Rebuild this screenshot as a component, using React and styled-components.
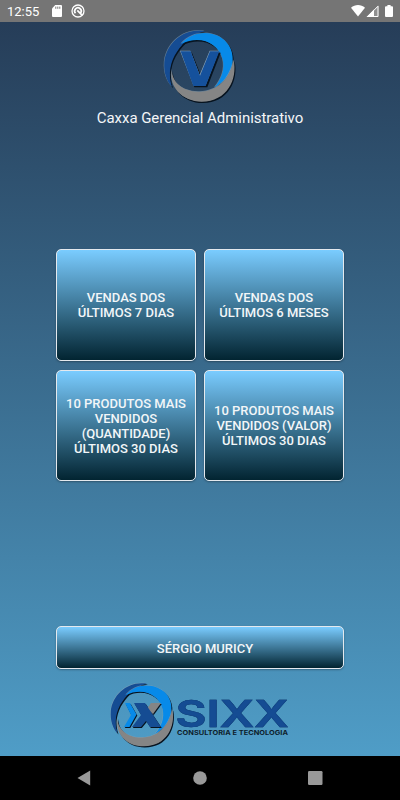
import styled, { createGlobalStyle } from 'styled-components';

const reports = [
  ['VENDAS DOS', 'ÚLTIMOS 7 DIAS'],
  ['VENDAS DOS', 'ÚLTIMOS 6 MESES'],
  ['10 PRODUTOS MAIS', 'VENDIDOS', '(QUANTIDADE)', 'ÚLTIMOS 30 DIAS'],
  ['10 PRODUTOS MAIS', 'VENDIDOS (VALOR)', 'ÚLTIMOS 30 DIAS'],
];

// the three blades of the ring: navy, light blue, gray
const blades = [
  ['#154c93', 'M150 21C88 10 34 56 28 114C26 146 34 170 51 189C38 150 46 112 66 83C86 53 112 32 150 21Z'],
  ['#078ae9', 'M78 60C104 30 140 22 172 30C212 40 236 72 233 112C231 148 208 176 178 191C200 166 210 136 203 106C190 56 134 32 78 60Z'],
  ['#858585', 'M51 136C48 174 86 206 136 203C186 201 222 170 236 108C248 166 216 233 140 233C82 233 40 188 51 136Z'],
];

const Ring = () => (
  <>
    {blades.map(([fill, d]) => (
      <g key={fill}>
        <path d={d} fill="#07131f" transform="translate(3 4)" />
        <path d={d} fill="#8aa3b5" transform="translate(-1.5 -1.5)" opacity="0.6" />
        <path d={d} fill={fill} />
      </g>
    ))}
  </>
);

const App = () => {
  return (
    <Screen>
      <GlobalStyle />
      <StatusBar>
        <Clock>12:55</Clock>
        <svg width="10" height="12" viewBox="0 0 10 12">
          <path fill="#fff" d="M3.2 0H9a1 1 0 0 1 1 1v10a1 1 0 0 1-1 1H1a1 1 0 0 1-1-1V3.4z" />
          <path stroke="#757575" d="M3.8 1.6v2.2M5.8 1.6v2.2M7.8 1.6v2.2" />
        </svg>
        <svg width="14" height="14" viewBox="0 0 14 14" fill="none" stroke="#fff">
          <circle cx="7" cy="7" r="6" strokeWidth="1.3" />
          <path d="M4.5 9.3A3.3 3.3 0 1 1 9.8 8.8M6.3 6.3l5 5" strokeWidth="1.7" />
        </svg>
        <Signals>
          <svg width="14" height="12" viewBox="0 0 14 12">
            <path fill="#fff" d="M0 2.8C4-.9 10-.9 14 2.8L7 11.6z" />
          </svg>
          <svg width="13" height="12" viewBox="0 0 13 12">
            <path fill="#fff" fillOpacity="0.2" d="M12.5 0v12H.5z" />
            <path fill="#fff" d="M8 4.5V12H.5z" />
            <path fill="none" stroke="#fff" d="M12 1.2v10.3H1.7z" />
          </svg>
          <svg width="8" height="12" viewBox="0 0 8 12">
            <path fill="#fff" d="M2.4 0h3.2v1.2H7a1 1 0 0 1 1 1V11a1 1 0 0 1-1 1H1a1 1 0 0 1-1-1V2.2a1 1 0 0 1 1-1h1.4z" />
          </svg>
        </Signals>
      </StatusBar>

      <Content>
        <Header>
          <svg width="90" height="84" viewBox="0 0 270 252">
            <Ring />
            <path fill="#07131f" d="M80 86h31l28 72 30-72h28l-40 104h-39z" />
            <path fill="#8aa3b5" d="M75 80h31l28 72 30-72h28l-40 104h-37z" />
            <path fill="#15519c" d="M77 82h30l28 73 30-73h28l-41 104h-37z" />
          </svg>
          <Title>Caxxa Gerencial Administrativo</Title>
        </Header>

        <Grid>
          {reports.map((lines) => (
            <ReportButton key={lines.join(' ')}>
              {lines.map((line) => (
                <span key={line}>{line}</span>
              ))}
            </ReportButton>
          ))}
        </Grid>

        <UserButton>SÉRGIO MURICY</UserButton>

        <Footer>
          <svg width="190" height="75" viewBox="0 0 190 75">
            <g transform="translate(-2.5 -.6) scale(.296)">
              <Ring />
            </g>
            <g fill="#07131f" transform="translate(.8 1)">
              <path d="M20 25h5l6.500 11.500L24.500 49H19l7-12z" />
              <path d="M42 31l4-6h10l-8 11z" />
              <path d="M29 25h11l16 24H45l-4-6-5 6h-9l9-12z" />
            </g>
            <path fill="#078ae9" d="M20 25h5l6.500 11.500L24.500 49H19l7-12z" />
            <path fill="#858585" d="M42 31l4-6h10l-8 11z" />
            <path fill="#154c93" d="M29 25h11l16 24H45l-4-6-5 6h-9l9-12z" />
            <Wordmark x="70.5" y="48.5" textLength="113" lengthAdjust="spacingAndGlyphs">
              SIXX
            </Wordmark>
            <Tagline x="72" y="56.5" textLength="111" lengthAdjust="spacingAndGlyphs">
              CONSULTORIA E TECNOLOGIA
            </Tagline>
          </svg>
        </Footer>
      </Content>

      <NavBar>
        <svg width="14" height="16" viewBox="0 0 14 16">
          <path fill="#999" d="M13.2.5v15L.5 8z" />
        </svg>
        <svg width="14" height="14" viewBox="0 0 14 14">
          <circle cx="7" cy="7" r="6.8" fill="#999" />
        </svg>
        <svg width="15" height="14" viewBox="0 0 15 14">
          <rect width="14.5" height="14" rx="1.2" fill="#999" />
        </svg>
      </NavBar>
    </Screen>
  );
};

const GlobalStyle = createGlobalStyle`
  * {
    box-sizing: border-box;
  }

  body {
    margin: 0;
    font-family: Roboto, sans-serif;
  }
`;

const Screen = styled.div`
  display: flex;
  flex-direction: column;
  width: 400px;
  height: 800px;
  overflow: hidden;
`;

const StatusBar = styled.div`
  display: flex;
  align-items: center;
  flex: none;
  height: 22px;
  padding: 0 7px;
  background: #757575;
  color: #fff;

  svg {
    margin-right: 9px;
  }
`;

const Clock = styled.span`
  width: 45px;
  font-size: 13px;
`;

const Signals = styled.div`
  display: flex;
  align-items: center;
  margin-left: auto;

  svg {
    margin: 0 0 0 1px;
  }

  svg:last-child {
    margin-left: 6px;
  }
`;

const Content = styled.div`
  display: flex;
  flex-direction: column;
  flex: 1;
  min-height: 0;
  padding: 2px 56px 0;
  background: linear-gradient(#263d58, #4f9dc7);
`;

const Header = styled.div`
  display: flex;
  flex-direction: column;
  align-items: center;
  flex: none;
  height: 225px;
`;

const Title = styled.h1`
  margin: 1px 0 0;
  font-size: 15px;
  font-weight: 400;
  line-height: 18px;
  letter-spacing: -0.05px;
  color: #f4f6f8;
`;

const Grid = styled.div`
  display: grid;
  grid-template-columns: 140px 140px;
  grid-template-rows: 112px 111px;
  gap: 9px 8px;
`;

const Button = styled.button`
  padding: 0;
  border: 1px solid #e4e9ee;
  border-radius: 5px;
  font-family: inherit;
  font-size: 13px;
  font-weight: 500;
  line-height: 15px;
  color: #f2f6f8;
  background: linear-gradient(#7accff, #022431);
  box-shadow: 0 1px 2px rgba(0, 0, 0, 0.3);
`;

const ReportButton = styled(Button)`
  display: flex;
  flex-direction: column;
  align-items: center;
  justify-content: center;
`;

const UserButton = styled(Button)`
  flex: none;
  height: 43px;
  margin-top: 145px;
  padding: 1px 0 0 10px;
`;

const Footer = styled.div`
  margin: 9px 0 0 49px;
`;

const Wordmark = styled.text`
  font-family: Inter, sans-serif;
  font-size: 36.5px;
  font-weight: 600;
  fill: #154c93;
  stroke: #154c93;
  stroke-width: 0.6px;
  filter: drop-shadow(0.7px 0.9px 0 #0b2a4e);
`;

const Tagline = styled.text`
  font-family: Inter, sans-serif;
  font-size: 6.5px;
  font-weight: 700;
  fill: #0d1d2b;
`;

const NavBar = styled.div`
  display: flex;
  align-items: center;
  justify-content: space-between;
  flex: none;
  height: 44px;
  padding: 0 77px;
  background: #000;
`;

export default App;
